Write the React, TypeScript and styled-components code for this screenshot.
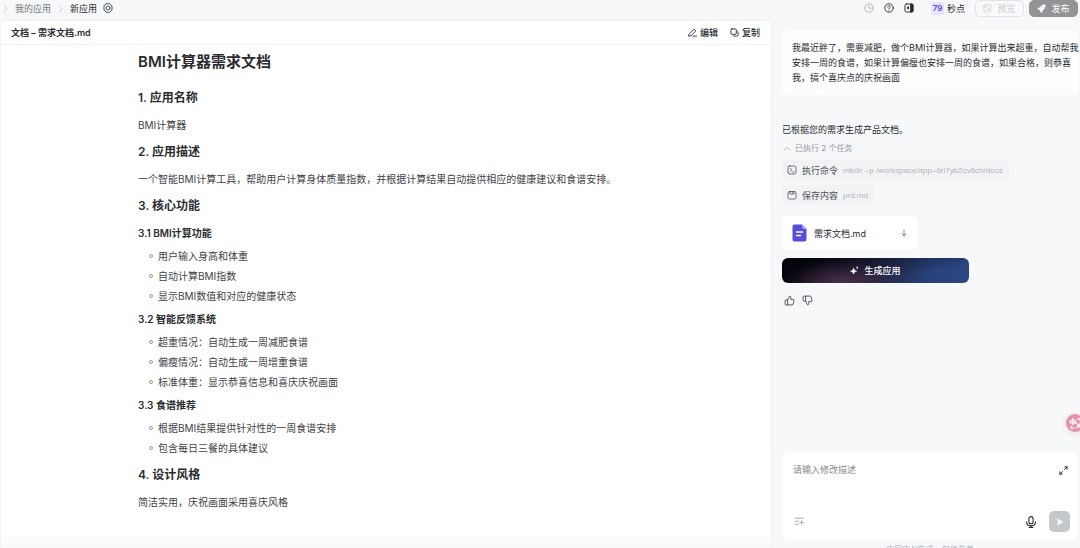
import React from "react";
import styled, { createGlobalStyle, css } from "styled-components";

const Global = createGlobalStyle`
  *, *::before, *::after { box-sizing: border-box; }
  html, body, #root { height: 100%; }
  body {
    margin: 0;
    overflow: hidden;
    background: #f6f8fa;
    color: #2b2d31;
    font-family: Inter, "Noto Sans CJK SC", sans-serif;
    font-size: 9px;
    line-height: 15px;
  }
  button, textarea { font: inherit; color: inherit; }
  h1, h2, h3, p, ul { margin: 0; padding: 0; }
  svg { display: block; flex: none; }
`;

const Page = styled.div`
  display: flex;
  flex-direction: column;
  height: 100vh;
`;

const TopBar = styled.header`
  display: flex;
  align-items: center;
  justify-content: space-between;
  flex: none;
  height: 21px;
  padding: 0 2px 5px 1px;
`;

const Crumbs = styled.nav`
  display: flex;
  align-items: center;
  gap: 5px;
  color: #b4b7bc;
`;

const Crumb = styled.a<{ $current?: boolean }>`
  color: ${(p) => (p.$current ? "#2b2d31" : "#777a80")};
  text-decoration: none;
`;

const TopActions = styled.div`
  display: flex;
  align-items: center;
`;

const plainButton = css`
  display: inline-flex;
  align-items: center;
  justify-content: center;
  padding: 0;
  border: 0;
  background: none;
  cursor: pointer;
`;

const IconButton = styled.button<{ $muted?: boolean; $compact?: boolean }>`
  ${plainButton}
  width: ${(p) => (p.$compact ? "12px" : "20px")};
  height: 16px;
  color: ${(p) => (p.$muted ? "#a8abb0" : "#2b2d31")};
`;

const Credits = styled.span`
  display: flex;
  align-items: center;
  gap: 3px;
  margin: 0 10px 0 12px;
`;

const CreditCount = styled.span`
  width: 13px;
  border-radius: 3px;
  background: #e6e3fc;
  color: #5546dc;
  font-size: 8px;
  font-weight: 600;
  line-height: 13px;
  text-align: center;
`;

const PillButton = styled.button<{ $solid?: boolean }>`
  ${plainButton}
  gap: 5px;
  width: 49px;
  height: 17px;
  margin-left: ${(p) => (p.$solid ? "5px" : "0")};
  border: 1px solid ${(p) => (p.$solid ? "#939496" : "#e2e4e7")};
  border-radius: 5px;
  background: ${(p) => (p.$solid ? "#939496" : "#f9fafb")};
  color: ${(p) => (p.$solid ? "#ffffff" : "#c9cbcf")};
`;

const Body = styled.div`
  display: flex;
  flex: 1;
  gap: 11px;
  min-height: 0;
  padding: 0 2px 0 1px;
`;

const DocPanel = styled.main`
  display: flex;
  flex: 1;
  flex-direction: column;
  min-width: 0;
  border-radius: 5px 0 0 0;
  background: linear-gradient(#ffffff calc(100% - 14px), #f9f9fa);
  box-shadow: 0 0 4px #e9ebee;
`;

const DocToolbar = styled.div`
  display: flex;
  align-items: center;
  justify-content: space-between;
  flex: none;
  height: 24px;
  padding: 0 11px 0 10px;
  border-bottom: 1px solid #f1f2f4;
`;

const DocName = styled.span`
  font-weight: 600;
`;

const ToolGroup = styled.div`
  display: flex;
  gap: 12px;
`;

const ToolButton = styled.button`
  ${plainButton}
  gap: 3px;
  font-weight: 500;
`;

const Article = styled.article`
  flex: 1;
  min-height: 0;
  overflow: hidden;
  padding: 7px 137px 0;
  color: #3f4246;
  font-size: 10px;
  line-height: 20px;

  h1, h2, h3 { color: #2a2c30; font-weight: 600; }
  h1 { margin-bottom: 16px; font-size: 15px; }
  h2 { margin: 7px 0; font-size: 12px; }
  h3 { margin: 3px 0; font-size: 10px; }
  h2 + h3 { margin-top: 7px; }
`;

const Bullets = styled.ul`
  list-style: none;
`;

const Bullet = styled.li`
  display: flex;
  align-items: center;
  gap: 5px;
  padding-left: 11px;

  &::before {
    content: "";
    width: 4px;
    height: 4px;
    border: 1px solid #96999e;
    border-radius: 50%;
  }
`;

const Chat = styled.aside`
  display: flex;
  flex: none;
  flex-direction: column;
  width: 296px;
`;

const Thread = styled.section`
  display: flex;
  flex: 1;
  flex-direction: column;
  align-items: flex-start;
  min-height: 0;
`;

const UserMessage = styled.p`
  align-self: stretch;
  margin: 9px 0 27px;
  padding: 10px 0 10px 10px;
  border-radius: 5px;
  background: #fdfdfe;
  white-space: pre;
`;

const Reply = styled.p`
  margin-bottom: 4px;
`;

const TaskToggle = styled.button`
  ${plainButton}
  gap: 4px;
  margin: 0 0 4px 1px;
  color: #94979d;
  font-size: 8px;
`;

const Task = styled.div`
  display: flex;
  align-items: center;
  gap: 5px;
  height: 20px;
  margin-bottom: 5px;
  padding: 0 6px 0 5px;
  border-radius: 4px;
  background: #f1f3f5;
  color: #4e5157;
`;

const TaskDetail = styled.span`
  color: #b4b7bd;
  font-family: "Liberation Sans", sans-serif;
  font-size: 8px;
`;

const FileCard = styled.a`
  display: flex;
  align-items: center;
  gap: 7px;
  width: 136px;
  height: 34px;
  margin: 6px 0 8px;
  padding: 0 10px;
  border-radius: 6px;
  background: #ffffff;
  color: #2b2d31;
  text-decoration: none;
`;

const FileName = styled.span`
  flex: 1;
`;

const GenerateButton = styled.button`
  ${plainButton}
  gap: 5px;
  width: 187px;
  height: 25px;
  border-radius: 6px;
  background:
    radial-gradient(ellipse 60px 22px at 32% 100%, #4a3049, transparent),
    linear-gradient(170deg, rgba(4, 5, 14, 0.7), transparent 70%),
    linear-gradient(90deg, #05050b 10%, #20203a 45%, #28437c 80%, #2b4681);
  color: #ffffff;
  font-weight: 500;
`;

const Feedback = styled.div`
  display: flex;
  gap: 7px;
  margin: 12px 0 0 2px;
`;

const FeedbackButton = styled.button`
  ${plainButton}
  color: #44474c;
`;

const Composer = styled.form`
  display: flex;
  flex: none;
  flex-direction: column;
  justify-content: space-between;
  height: 86px;
  padding: 9px 8px 7px 11px;
  border-radius: 7px;
  background: #ffffff;
`;

const ComposerRow = styled.div`
  display: flex;
  align-items: center;
  justify-content: space-between;
`;

const ComposerTools = styled.div`
  display: flex;
  align-items: center;
  gap: 12px;
`;

const Prompt = styled.textarea`
  flex: 1;
  height: 36px;
  padding: 0;
  border: 0;
  outline: 0;
  background: none;
  resize: none;

  &::placeholder { color: #85888e; opacity: 1; }
`;

const ExpandButton = styled(IconButton)`
  align-self: flex-start;
  width: 14px;
`;

const SendButton = styled.button`
  ${plainButton}
  width: 21px;
  height: 21px;
  border-radius: 5px;
  background: #c5c8cb;
  color: #ffffff;
`;

const Notice = styled.p`
  flex: none;
  height: 9px;
  padding-top: 3px;
  overflow: hidden;
  color: #b4b7bc;
  font-size: 8px;
  text-align: center;
`;

const Translate = styled.button`
  ${plainButton}
  position: fixed;
  right: -4px;
  bottom: 116px;
  width: 18px;
  height: 18px;
  border-radius: 50%;
  background: #e391a8;
  box-shadow: 0 1px 4px 2px #f1e7eb;
  color: #ffffff;
`;

type IconProps = { size?: number; width?: number; children: React.ReactNode };

const Icon = ({ size = 10, width = 1.6, children }: IconProps) => (
  <svg
    width={size}
    height={size}
    viewBox="0 0 20 20"
    fill="none"
    stroke="currentColor"
    strokeWidth={width}
    strokeLinecap="round"
    strokeLinejoin="round"
    aria-hidden="true"
  >
    {children}
  </svg>
);

const Chevron = () => (
  <Icon size={9}><path d="M7 3l7 7-7 7" /></Icon>
);

const thumb = "M6.500 9v9H3.500A1.500 1.500 0 0 1 2 16.500V10.500A1.500 1.500 0 0 1 3.500 9H6.500L10 2c1.800 0 2.700 1.200 2.500 2.800L12 8h4.500c1.200 0 2 1 1.700 2.200l-1.500 6.300c-.2.900-.9 1.500-1.800 1.500H6.500";

const sections = [
  { title: "3.1 BMI计算功能", items: ["用户输入身高和体重", "自动计算BMI指数", "显示BMI数值和对应的健康状态"] },
  { title: "3.2 智能反馈系统", items: ["超重情况：自动生成一周减肥食谱", "偏瘦情况：自动生成一周增重食谱", "标准体重：显示恭喜信息和喜庆庆祝画面"] },
  { title: "3.3 食谱推荐", items: ["根据BMI结果提供针对性的一周食谱安排", "包含每日三餐的具体建议"] },
];

const request = [
  "我最近胖了，需要减肥，做个BMI计算器，如果计算出来超重，自动帮我",
  "安排一周的食谱，如果计算偏瘦也安排一周的食谱，如果合格，则恭喜",
  "我，搞个喜庆点的庆祝画面",
].join("\n");

export default function App() {
  return (
    <Page lang="zh-CN">
      <Global />
      <TopBar>
        <Crumbs aria-label="路径">
          <Chevron />
          <Crumb href="#apps">我的应用</Crumb>
          <Chevron />
          <Crumb href="#app" $current>新应用</Crumb>
          <IconButton type="button" aria-label="应用设置" $compact>
            <Icon>
              <path d="M7 1.500h6l5 4.500v8l-5 4.500H7L2 14V6z" />
              <circle cx="10" cy="10" r="4" />
            </Icon>
          </IconButton>
        </Crumbs>
        <TopActions>
          <IconButton type="button" aria-label="历史" $muted>
            <Icon><circle cx="10" cy="10" r="8.500" /><path d="M10 5v5.500h4" /></Icon>
          </IconButton>
          <IconButton type="button" aria-label="帮助">
            <Icon width={1.8}>
              <circle cx="10" cy="10" r="8.500" />
              <path d="M7.500 8c0-3.500 5-3.500 5-.3 0 1.800-2.500 1.800-2.500 3.800M10 14.500v.2" />
            </Icon>
          </IconButton>
          <IconButton type="button" aria-label="侧栏">
            <Icon width={2}>
              <rect x="2" y="2" width="16" height="16" rx="3" />
              <path d="M14 2h2q2 0 2 2v12q0 2-2 2h-2z" fill="currentColor" />
              <path d="M9 8v4l-2.500-2z" fill="currentColor" />
            </Icon>
          </IconButton>
          <Credits><CreditCount>79</CreditCount>秒点</Credits>
          <PillButton type="button">
            <Icon size={9}>
              <path d="M8 18H4a2 2 0 0 1-2-2V4a2 2 0 0 1 2-2h12a2 2 0 0 1 2 2v4M6 6h3M2 7h4" />
              <circle cx="13" cy="12.500" r="3.500" /><path d="M15.500 15.500L18 18" />
            </Icon>
            预览
          </PillButton>
          <PillButton type="button" $solid>
            <Icon size={9} width={1}>
              <path d="M18 2c-5-.5-9 1.500-11 6L3 9l-1 3 4 .5L8 15l.5 4 3-1.500.5-4c4.500-2 6.500-6 6-11.500z" fill="currentColor" />
              <circle cx="12.500" cy="7.500" r="1.500" fill="#939496" />
            </Icon>
            发布
          </PillButton>
        </TopActions>
      </TopBar>

      <Body>
        <DocPanel>
          <DocToolbar>
            <DocName>文档 – 需求文档.md</DocName>
            <ToolGroup>
              <ToolButton type="button">
                <Icon size={9} width={2}>
                  <path d="M3 13L13.500 2.500l4 4L7 17l-5 1zM11 18h8" />
                </Icon>
                编辑
              </ToolButton>
              <ToolButton type="button">
                <Icon size={9} width={2}>
                  <rect x="2" y="2" width="12" height="12" rx="2.500" />
                  <path d="M17 7q1 .7 1 2v6a3 3 0 0 1-3 3H9q-1.500 0-2-1" />
                </Icon>
                复制
              </ToolButton>
            </ToolGroup>
          </DocToolbar>
          <Article>
            <h1>BMI计算器需求文档</h1>
            <h2>1. 应用名称</h2>
            <p>BMI计算器</p>
            <h2>2. 应用描述</h2>
            <p>一个智能BMI计算工具，帮助用户计算身体质量指数，并根据计算结果自动提供相应的健康建议和食谱安排。</p>
            <h2>3. 核心功能</h2>
            {sections.map((s) => (
              <React.Fragment key={s.title}>
                <h3>{s.title}</h3>
                <Bullets>
                  {s.items.map((item) => <Bullet key={item}>{item}</Bullet>)}
                </Bullets>
              </React.Fragment>
            ))}
            <h2>4. 设计风格</h2>
            <p>简洁实用，庆祝画面采用喜庆风格</p>
          </Article>
        </DocPanel>

        <Chat>
          <Thread>
            <UserMessage>{request}</UserMessage>
            <Reply>已根据您的需求生成产品文档。</Reply>
            <TaskToggle type="button">
              <Icon size={8}><path d="M3 13l7-7 7 7" /></Icon>
              已执行 2 个任务
            </TaskToggle>
            <Task>
              <Icon><rect x="2" y="2" width="16" height="16" rx="3" /><path d="M6 6.500l3.500 3.500L6 13.500M11 14h3" /></Icon>
              执行命令
              <TaskDetail>mkdir –p /workspace/app–6ri7yb2cv6ch/docs</TaskDetail>
            </Task>
            <Task>
              <Icon><rect x="2" y="3" width="16" height="15" rx="3" /><path d="M6 3v5h8V3M11 5.500v.5" /></Icon>
              保存内容
              <TaskDetail>prd.md</TaskDetail>
            </Task>
            <FileCard href="#doc">
              <svg width="15" height="18" viewBox="0 0 15 18" aria-hidden="true">
                <path d="M2.500 0.500H10L14.500 5V15a2.500 2.500 0 0 1-2.500 2.500H2.500A2 2 0 0 1 .5 15.500v-13a2 2 0 0 1 2-2z" fill="#594bdc" />
                <path d="M10 .5L14.500 5H11.500A1.500 1.500 0 0 1 10 3.500z" fill="#a9a1f3" />
                <path d="M4.500 8h6M4.500 11.500h4" stroke="#ffffff" strokeWidth="1.300" strokeLinecap="round" />
              </svg>
              <FileName>需求文档.md</FileName>
              <Icon size={8} width={1.4}><path d="M10 3v14M5 12l5 5 5-5" /></Icon>
            </FileCard>
            <GenerateButton type="button">
              <Icon size={9} width={1}>
                <path d="M8 5l2 4.500 5 2-5 2L8 18l-2-4.500-5-2 5-2z" fill="currentColor" />
                <path d="M16 2l.6 1.400L18 4l-1.400.6L16 6l-.6-1.400L14 4l1.400-.6z" fill="currentColor" />
              </Icon>
              生成应用
            </GenerateButton>
            <Feedback>
              <FeedbackButton type="button" aria-label="赞">
                <Icon size={11}><path d={thumb} /></Icon>
              </FeedbackButton>
              <FeedbackButton type="button" aria-label="踩">
                <Icon size={11}><g transform="matrix(1 0 0 -1 0 20)"><path d={thumb} /></g></Icon>
              </FeedbackButton>
            </Feedback>
          </Thread>
          <Composer>
            <ComposerRow>
              <Prompt aria-label="修改描述" placeholder="请输入修改描述" />
              <ExpandButton type="button" aria-label="展开">
                <Icon size={9} width={2.200}><path d="M13 2h5v5M18 2l-5.500 5.500M7 18H2v-5M2 18l5.500-5.500" /></Icon>
              </ExpandButton>
            </ComposerRow>
            <ComposerRow>
              <IconButton type="button" aria-label="添加" $compact $muted>
                <Icon size={11} width={1.800}><path d="M2 4h16M2 9.500h6M2 15h6M14 8.500v7M10.500 12h7.500" /></Icon>
              </IconButton>
              <ComposerTools>
                <IconButton type="button" aria-label="语音" $compact>
                  <Icon size={12} width={1.8}>
                    <rect x="6.500" y="1" width="7" height="12" rx="3.500" />
                    <path d="M2.500 9.500c0 9 15 9 15 0M10 16.500V19M7 19h6" />
                  </Icon>
                </IconButton>
                <SendButton type="submit" aria-label="发送">
                  <Icon size={8} width={1}><path d="M3 2l15 8-15 8 3-8z" fill="currentColor" /></Icon>
                </SendButton>
              </ComposerTools>
            </ComposerRow>
          </Composer>
          <Notice>内容由AI生成，仅供参考</Notice>
        </Chat>
      </Body>
      <Translate type="button" aria-label="翻译">
        <Icon size={13} width={1.8}>
          <path d="M2 5h8v4H2zM6 2v10M11 9l7 8M18 9l-7 8M13 3h4v3M3 14v3h4" />
        </Icon>
      </Translate>
    </Page>
  );
}
